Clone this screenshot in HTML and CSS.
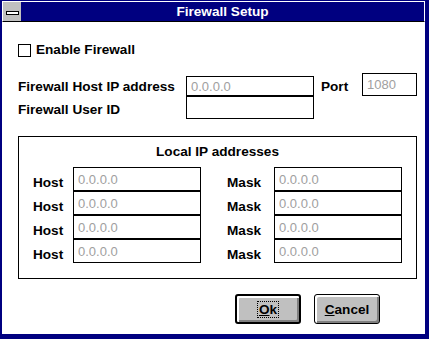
FILE: index.html
```html
<!DOCTYPE html>
<html>
<head>
<meta charset="utf-8">
<title>Firewall Setup</title>
<link rel="stylesheet" href="styles.css">
</head>
<body>
<div class="screen">
  <div class="window">
    <div class="titlebar">
      <div class="sysmenu"><span class="sysbar"></span></div>
      <div class="title">Firewall Setup</div>
    </div>
    <div class="client">
      <label class="check"><span class="box"></span>Enable Firewall</label>
      <div class="fw-grid">
        <span class="lbl">Firewall Host IP address</span>
        <input class="field host" value="0.0.0.0" readonly>
        <span class="lbl port-lbl">Port</span>
        <input class="field port" value="1080" readonly>
        <span class="lbl">Firewall User ID</span>
        <input class="field user" value="" readonly>
      </div>
      <div class="group">
        <div class="group-title">Local IP addresses</div>
        <div class="ip-grid">
          <span class="lbl2">Host</span><input class="field" value="0.0.0.0" readonly><span class="lbl2 mask">Mask</span><input class="field" value="0.0.0.0" readonly>
          <span class="lbl2">Host</span><input class="field" value="0.0.0.0" readonly><span class="lbl2 mask">Mask</span><input class="field" value="0.0.0.0" readonly>
          <span class="lbl2">Host</span><input class="field" value="0.0.0.0" readonly><span class="lbl2 mask">Mask</span><input class="field" value="0.0.0.0" readonly>
          <span class="lbl2">Host</span><input class="field" value="0.0.0.0" readonly><span class="lbl2 mask">Mask</span><input class="field" value="0.0.0.0" readonly>
        </div>
      </div>
      <div class="buttons">
        <button class="btn default"><span class="focus"><u>O</u>k</span></button>
        <button class="btn"><span><u>C</u>ancel</span></button>
      </div>
    </div>
  </div>
</div>
</body>
</html>
```
FILE: styles.css
```css
* { box-sizing: border-box; }
html, body { margin: 0; padding: 0; }
body {
  font-family: "Liberation Sans", Arial, sans-serif;
  font-weight: bold;
  font-size: 13.6px;
  color: #000;
  background: #000080;
}
.screen {
  width: 429px;
  height: 339px;
  background: #000080;
  padding: 1px 4px 5px 2px;
  display: flex;
  flex-direction: column;
}
.window {
  flex: 1;
  display: flex;
  flex-direction: column;
  background: #fff;
}
.titlebar {
  height: 21px;
  display: flex;
  background: #000080;
  border-top: 1px solid #fff;
  border-left: 1px solid #fff;
  border-right: 1px solid #fff;
  border-bottom: 1px solid #000;
}
.sysmenu {
  width: 18px;
  background: #c0c0c0;
  display: flex;
  justify-content: center;
  align-items: flex-start;
  padding-top: 9px;
}
.sysbar {
  width: 13px;
  height: 4px;
  background: #fff;
  border: 1px solid #000;
}
.title {
  flex: 1;
  color: #fff;
  text-align: center;
  line-height: 19px;
}
.client {
  flex: 1;
  padding: 20px 0 0 16px;
  display: flex;
  flex-direction: column;
  align-items: flex-start;
}
.check {
  display: flex;
  align-items: center;
  gap: 5px;
  line-height: 16px;
}
.box {
  width: 13px;
  height: 13px;
  border: 1px solid #000;
  background: #fff;
}
.fw-grid {
  margin-top: 15px;
  display: grid;
  grid-template-columns: 168px 128px 48px 55px;
  grid-template-rows: 23px 23px;
}
.lbl {
  align-self: end;
  line-height: 16px;
  padding-bottom: 1px;
  white-space: nowrap;
}
.port-lbl { padding-left: 7px; }
.field {
  display: block;
  margin: 0;
  width: 100%;
  height: 24px;
  border: 1px solid #000;
  border-radius: 0;
  background: #fff;
  padding: 0 4px;
  font-family: "Liberation Sans", Arial, sans-serif;
  font-weight: normal;
  font-size: 13px;
  color: #a0a0a0;
  outline: none;
}
.field.host { align-self: end; height: 20px; }
.field.port { height: 23px; }
.field.user { height: 23px; }
.group {
  margin-top: 17px;
  width: 399px;
  border: 1px solid #000;
  padding: 7px 14px 15px;
}
.group-title {
  text-align: center;
  line-height: 16px;
}
.ip-grid {
  margin-top: 7px;
  display: grid;
  grid-template-columns: 40px 128px 73px 128px;
  grid-auto-rows: 24px;
}
.lbl2 {
  padding-top: 8px;
  line-height: 16px;
}
.mask { padding-left: 26px; }
.buttons {
  margin-top: 15px;
  margin-left: 217px;
  display: flex;
  gap: 13px;
}
.btn {
  width: 66px;
  height: 30px;
  padding: 0;
  margin: 0;
  background: #c0c0c0;
  color: #000;
  font-family: "Liberation Sans", Arial, sans-serif;
  font-weight: bold;
  font-size: 13.6px;
  border: 1px solid #000;
  border-radius: 3px;
  box-shadow: inset 2px 2px #fff, inset -2px -2px #808080;
  display: flex;
  align-items: center;
  justify-content: center;
}
.btn.default { border-width: 2px; }
.focus {
  border: 1px dotted #000;
  padding: 0 1px;
  line-height: 15px;
}
```
